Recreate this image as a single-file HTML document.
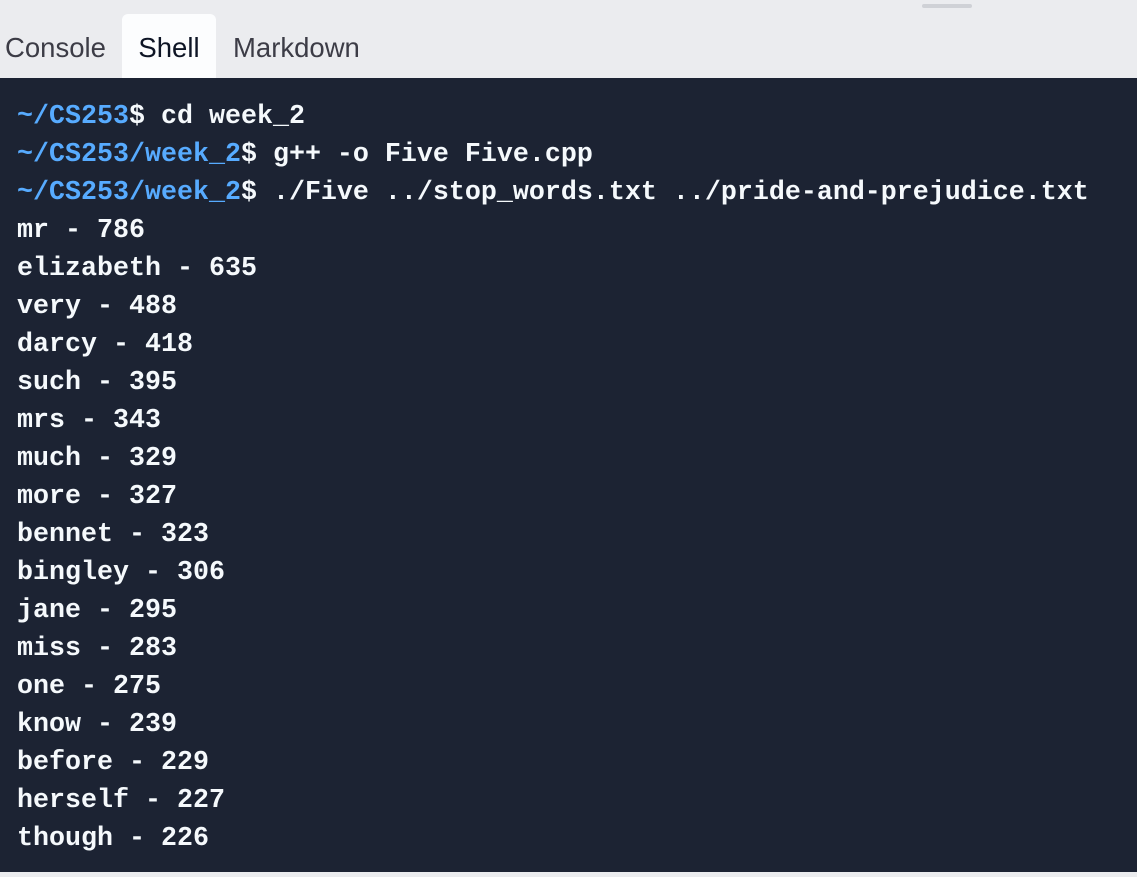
<!DOCTYPE html>
<html><head><style>
html,body{margin:0;padding:0;width:1137px;height:877px;overflow:hidden;background:#ebecef;}
.tabs{position:absolute;left:0;top:0;width:1137px;height:78px;background:#ebecef;font-family:"Liberation Sans",sans-serif;font-size:27.5px;color:#3c3c46;}
.tab{position:absolute;top:14px;height:64px;line-height:68px;}
.active{background:#fcfdfe;border-radius:6px 6px 0 0;color:#0e1525;}
.grip{position:absolute;left:922px;top:4px;width:50px;height:4px;border-radius:2px;background:#cfd1d6;}
.term{position:absolute;left:0;top:78px;width:1137px;height:794px;background:#1c2333;}
pre{margin:0;position:absolute;left:17px;top:20px;font-family:"Liberation Mono",monospace;font-weight:bold;font-size:26.67px;line-height:38px;color:#f5f9fc;}
.b{color:#57abff;}
</style></head><body>
<div class="tabs">
<div class="grip"></div>
<div class="tab" style="left:5px">Console</div>
<div class="tab active" style="left:122px;width:94px;text-align:center">Shell</div>
<div class="tab" style="left:233px">Markdown</div>
</div>
<div class="term"><pre><span class="b">~/CS253</span>$ cd week_2
<span class="b">~/CS253/week_2</span>$ g++ -o Five Five.cpp
<span class="b">~/CS253/week_2</span>$ ./Five ../stop_words.txt ../pride-and-prejudice.txt
mr - 786
elizabeth - 635
very - 488
darcy - 418
such - 395
mrs - 343
much - 329
more - 327
bennet - 323
bingley - 306
jane - 295
miss - 283
one - 275
know - 239
before - 229
herself - 227
though - 226</pre></div>
</body></html>
